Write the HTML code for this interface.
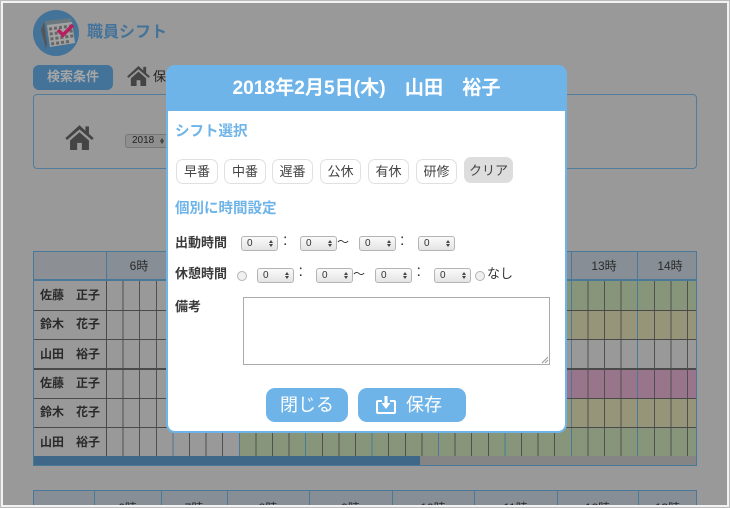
<!DOCTYPE html>
<html lang="ja"><head><meta charset="utf-8"><title>職員シフト</title>
<style>
*{box-sizing:border-box;margin:0;padding:0}
html,body{width:730px;height:508px;overflow:hidden;background:#999}
body{position:relative;font-family:"Liberation Sans","Noto Sans CJK JP",sans-serif;color:#333}
.a{position:absolute;white-space:nowrap}
.frame{position:absolute;left:0;top:0;width:730px;height:508px;border:1px solid #bbb;outline:2px solid #f2f2f2;outline-offset:-3px;z-index:50;pointer-events:none}
.sel{position:absolute;height:15px;width:37px;background:linear-gradient(#fafafa,#e4e4e4);border:1px solid #b4b4b4;border-radius:3px;font-size:10px;line-height:13px;padding-left:5px;color:#333}
.sel:before,.sel:after{content:"";position:absolute;right:4px;border-left:2px solid transparent;border-right:2px solid transparent}
.sel:before{top:3px;border-bottom:3px solid #444}
.sel:after{bottom:3px;border-top:3px solid #444}
.b{position:absolute;top:159px;height:25px;background:#fff;border:1px solid #e0e0e0;border-radius:7px;font-size:13px;line-height:23px;text-align:center;color:#444}
.nm{position:absolute;left:40px;width:66px;font-size:12px;font-weight:700;color:#2a2a2a;white-space:pre;line-height:29px}
.h{position:absolute;font-size:12px;line-height:28px;text-align:center;color:#2a2a2a;top:252px}
.t{position:absolute;top:499px;font-size:12px;line-height:18px;text-align:center;color:#2a2a2a}
.v{position:absolute;top:490px;width:1px;height:20px;background:#4a7898}
.c{position:absolute;font-size:16px;line-height:19px;color:#333}
.lab{position:absolute;left:175px;font-size:13px;font-weight:700;line-height:19px;color:#3a3a3a;white-space:nowrap}
</style></head><body>

<svg class="a" style="left:33px;top:10px" width="46" height="46" viewBox="0 0 46 46">
<circle cx="23" cy="23" r="23" fill="#44739a"/>
<path d="M11 12L8 20l5 19 1-5z" fill="#555"/>
<path d="M12 11l26-3 4 25-25 4z" fill="#69777e"/>
<path d="M14 15l25-3 3 21-25 4z" fill="#a2a2a2"/>
<g fill="#666" transform="rotate(-8 28 25)"><rect x="17" y="16" width="3" height="3"/><rect x="22" y="16" width="3" height="3"/><rect x="27" y="16" width="3" height="3"/><rect x="32" y="16" width="3" height="3"/><rect x="37" y="16" width="3" height="3"/><rect x="17" y="21" width="3" height="3"/><rect x="22" y="21" width="3" height="3"/><rect x="37" y="21" width="3" height="3"/><rect x="17" y="26" width="3" height="3"/><rect x="22" y="26" width="3" height="3"/><rect x="27" y="26" width="3" height="3"/><rect x="32" y="26" width="3" height="3"/><rect x="37" y="26" width="3" height="3"/><rect x="17" y="31" width="3" height="3"/><rect x="22" y="31" width="3" height="3"/><rect x="27" y="31" width="3" height="3"/><rect x="32" y="31" width="3" height="3"/></g>
<path d="M25 20l5 5 10-10" fill="none" stroke="#b51f5c" stroke-width="3.600"/>
</svg>
<div class="a" style="left:87px;top:22px;font-size:16px;font-weight:700;color:#44739a;line-height:22px">職員シフト</div>

<div class="a" style="left:33px;top:65px;width:80px;height:25px;background:#44739a;border-radius:6px;color:#a6a6a6;font-size:13px;font-weight:700;line-height:24px;text-align:center">検索条件</div>
<svg class="a" style="left:127px;top:65px" width="23" height="21" viewBox="0 0 24 22"><path d="M12 1L0 12l1.500 1.500L12 4.500l10.500 9L24 12l-4-3.600V2h-3v3.700z M4 14v8h6v-6h4v6h6v-8L12 7z" fill="#444"/></svg>
<div class="a" style="left:153px;top:68px;font-size:13px;line-height:18px;color:#222">保</div>

<div class="a" style="left:33px;top:94px;width:664px;height:75px;border:1px solid #527c9c;border-radius:4px"></div>
<svg class="a" style="left:65px;top:124px" width="29" height="26" viewBox="0 0 24 22"><path d="M12 1L0 12l1.500 1.500L12 4.500l10.500 9L24 12l-4-3.600V2h-3v3.700z M4 14v8h6v-6h4v6h6v-8L12 7z" fill="#444"/></svg>
<div class="sel" style="left:125px;top:134px;width:44px;height:14px;background:#8f8f8f;border-color:#777;font-size:10px;line-height:12px;padding-left:6px;color:#222">2018</div>

<!-- table 1 -->
<div class="a" style="left:33px;top:251px;width:664px;height:215px;border:1px solid #4a7898;overflow:hidden"></div>
<div class="a" style="left:34px;top:252px;width:662px;height:29px;background:#878e96;border-bottom:2px solid #4a7898"></div>
<div class="a" style="left:34px;top:252px;width:72px;height:29px;background:#8c9095;border-bottom:2px solid #4a7898"></div>
<div class="a" style="left:106px;top:252px;width:590px;height:29px;background:repeating-linear-gradient(90deg,#4a7898 0 1px,transparent 1px 66.400px)"></div>
<div class="h" style="left:106px;width:66px">6時</div>
<div class="h" style="left:571px;width:66px">13時</div>
<div class="h" style="left:637px;width:66px">14時</div>

<div class="a" style="left:240px;top:281px;width:456px;height:29px;background:#87967a"></div>
<div class="a" style="left:240px;top:310px;width:456px;height:30px;background:#96957a"></div>
<div class="a" style="left:240px;top:369px;width:456px;height:29px;background:#98758a"></div>
<div class="a" style="left:240px;top:398px;width:456px;height:30px;background:#96957a"></div>
<div class="a" style="left:240px;top:428px;width:456px;height:28px;background:#87967a"></div>

<div class="a" style="left:106px;top:281px;width:590px;height:175px;background:repeating-linear-gradient(90deg,#4a7898 0 1px,transparent 1px 16.600px,#505050 16.600px 17.600px,transparent 17.600px 33.200px,#505050 33.200px 34.200px,transparent 34.200px 49.800px,#505050 49.800px 50.800px,transparent 50.800px 66.400px)"></div>
<div class="a" style="left:34px;top:310px;width:662px;height:1px;background:#4a4a4a"></div>
<div class="a" style="left:34px;top:339px;width:662px;height:1px;background:#4a4a4a"></div>
<div class="a" style="left:34px;top:368px;width:662px;height:2px;background:#4a4a4a"></div>
<div class="a" style="left:34px;top:398px;width:662px;height:1px;background:#4a4a4a"></div>
<div class="a" style="left:34px;top:427px;width:662px;height:1px;background:#4a4a4a"></div>
<div class="a" style="left:106px;top:281px;width:1px;height:175px;background:#4a4a4a"></div>

<div class="nm" style="top:281px">佐藤　正子</div>
<div class="nm" style="top:310px">鈴木　花子</div>
<div class="nm" style="top:340px">山田　裕子</div>
<div class="nm" style="top:369px">佐藤　正子</div>
<div class="nm" style="top:398px">鈴木　花子</div>
<div class="nm" style="top:428px">山田　裕子</div>

<div class="a" style="left:34px;top:456px;width:662px;height:9px;background:#858585"></div>
<div class="a" style="left:34px;top:456px;width:386px;height:9px;background:#3f6888"></div>

<!-- table 2 -->
<div class="a" style="left:33px;top:490px;width:664px;height:20px;background:#878e96;border:1px solid #4a7898"></div>
<div class="v" style="left:94px"></div>
<div class="v" style="left:161px"></div>
<div class="v" style="left:227px"></div>
<div class="v" style="left:309px"></div>
<div class="v" style="left:392px"></div>
<div class="v" style="left:474px"></div>
<div class="v" style="left:557px"></div>
<div class="v" style="left:638px"></div>
<div class="t" style="left:94px;width:67px">6時</div>
<div class="t" style="left:161px;width:66px">7時</div>
<div class="t" style="left:227px;width:82px">8時</div>
<div class="t" style="left:309px;width:83px">9時</div>
<div class="t" style="left:392px;width:82px">10時</div>
<div class="t" style="left:474px;width:83px">11時</div>
<div class="t" style="left:557px;width:81px">12時</div>
<div class="t" style="left:638px;width:59px">13時</div>

<!-- modal -->
<div class="a" style="left:166px;top:65px;width:401px;height:368px;background:#fff;border:2px solid #6eb4e8;border-radius:9px;z-index:1"></div>
<div class="a" style="left:166px;top:65px;width:401px;height:46px;background:#6eb4e8;border-radius:9px 9px 0 0;z-index:2;color:#fff;font-size:19.150px;font-weight:700;line-height:47px;text-align:center;white-space:pre">2018年2月5日(木)　山田　裕子</div>

<div style="position:absolute;left:0;top:0;z-index:3">
<div class="a" style="left:175px;top:122px;font-size:14.500px;font-weight:700;color:#6eb4e8;line-height:20px">シフト選択</div>
<div class="b" style="left:176px;width:42px">早番</div>
<div class="b" style="left:224px;width:42px">中番</div>
<div class="b" style="left:272px;width:41px">遅番</div>
<div class="b" style="left:320px;width:41px">公休</div>
<div class="b" style="left:368px;width:41px">有休</div>
<div class="b" style="left:416px;width:41px">研修</div>
<div class="b" style="left:464px;top:157px;width:49px;height:26px;background:#ddd;border-color:#ddd;line-height:25px">クリア</div>
<div class="a" style="left:175px;top:199px;font-size:14.500px;font-weight:700;color:#6eb4e8;line-height:20px">個別に時間設定</div>

<div class="lab" style="top:233px">出動時間</div>
<div class="sel" style="left:241px;top:236px">0</div>
<div class="c" style="left:283px;top:231px">:</div>
<div class="sel" style="left:300px;top:236px">0</div>
<div class="a" style="left:337px;top:233px;font-size:12px;line-height:19px">〜</div>
<div class="sel" style="left:359px;top:236px">0</div>
<div class="c" style="left:400px;top:231px">:</div>
<div class="sel" style="left:418px;top:236px">0</div>

<div class="lab" style="top:264px">休憩時間</div>
<div class="a" style="left:237px;top:271px;width:10px;height:10px;border:1px solid #b4b4b4;border-radius:50%;background:#f0f0f0"></div>
<div class="sel" style="left:257px;top:268px">0</div>
<div class="c" style="left:298.500px;top:262px">:</div>
<div class="sel" style="left:316px;top:268px">0</div>
<div class="a" style="left:353px;top:265px;font-size:12px;line-height:19px">〜</div>
<div class="sel" style="left:375px;top:268px">0</div>
<div class="c" style="left:416.500px;top:262px">:</div>
<div class="sel" style="left:434px;top:268px">0</div>
<div class="a" style="left:475px;top:271px;width:10px;height:10px;border:1px solid #b4b4b4;border-radius:50%;background:#f0f0f0"></div>
<div class="a" style="left:487px;top:264px;font-size:13px;line-height:19px">なし</div>

<div class="lab" style="top:297px">備考</div>
<div class="a" style="left:243px;top:297px;width:307px;height:68px;border:1px solid #aaa;background:#fff"></div>
<svg class="a" style="left:541px;top:356px" width="8" height="8" viewBox="0 0 8 8"><path d="M1 7L7 1M4 7L7 4" stroke="#999" fill="none"/></svg>

<div class="a" style="left:266px;top:388px;width:82px;height:34px;background:#6eb4e8;border-radius:9px;color:#fff;font-size:18px;line-height:35px;text-align:center">閉じる</div>
<div class="a" style="left:358px;top:388px;width:108px;height:34px;background:#6eb4e8;border-radius:9px"></div>
<svg class="a" style="left:376px;top:396px" width="20" height="18" viewBox="0 0 20 18"><path d="M6 5H2a1 1 0 0 0-1 1v10a1 1 0 0 0 1 1h16a1 1 0 0 0 1-1V6a1 1 0 0 0-1-1h-4" fill="none" stroke="#fff" stroke-width="2"/><path d="M8.500 0h3v7h3l-4.500 6-4.500-6h3z" fill="#fff"/></svg>
<div class="a" style="left:406px;top:388px;color:#fff;font-size:18px;line-height:35px">保存</div>
</div>

<div class="frame"></div>
</body></html>
